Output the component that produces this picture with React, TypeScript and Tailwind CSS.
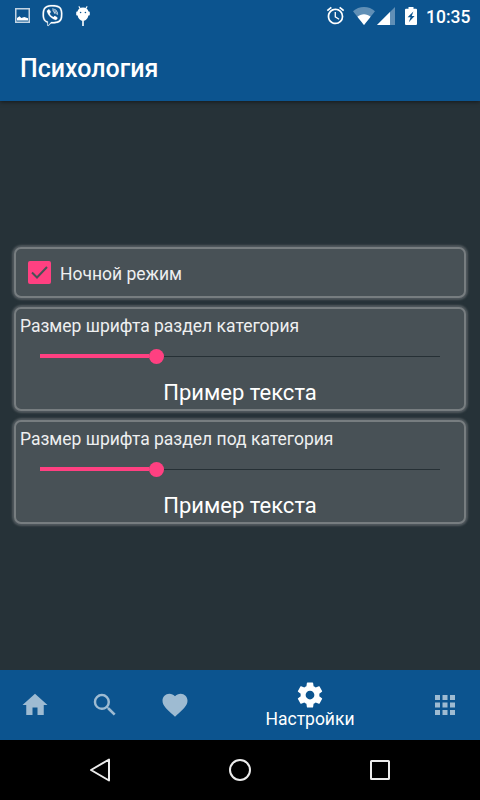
import type { ReactNode } from 'react'
import { FaViber } from 'react-icons/fa'
import { MdAlarm, MdApps, MdFavorite, MdHome, MdSearch } from 'react-icons/md'

function PictureIcon() {
  return (
    <svg viewBox="0 0 15 15" className="h-[15px] w-[15px]" fill="none">
      <rect x="0.75" y="0.75" width="13.5" height="13.5" stroke="#c3d4e3" strokeWidth="1.5" />
      <path d="M2 12.5V10l2.5-1.7L6.3 10l3-1 3.7 1.2v2.3z" fill="#fff" />
    </svg>
  )
}

function DroidIcon() {
  return (
    <svg viewBox="0 0 14 20" className="h-5 w-3.5" fill="#fff">
      <path d="M2.8.4 4.5 3M11.2.4 9.5 3" stroke="#fff" strokeWidth="1.1" />
      <path d="M7 1.4c3.2 0 5.2 1.8 5.5 4.2h.5a.8.8 0 0 1 .8.8v2.4a.8.8 0 0 1-.8.8h-.6C11.8 12.700 9.800 15 7 15S2.200 12.700 1.600 9.600H1a.8.8 0 0 1-.8-.8V6.400a.8.8 0 0 1 .8-.8h.5C1.800 3.200 3.800 1.400 7 1.400z" />
      <path d="M6.200 14.500h1.600V20H6.200z" />
      <circle cx="4.600" cy="6.500" r=".8" fill="#0c548f" />
      <circle cx="9.400" cy="6.500" r=".8" fill="#0c548f" />
    </svg>
  )
}

function WifiIcon() {
  return (
    <svg viewBox="0 0 22 18" className="h-[18px] w-[22px]">
      <path d="M11 18 0 4.2C3 1.6 6.8 0 11 0s8 1.6 11 4.2z" fill="#fff" fillOpacity=".35" />
      <path d="M11 18 4.4 9.7C6.2 8.2 8.5 7.3 11 7.3s4.8.9 6.6 2.4z" fill="#fff" />
    </svg>
  )
}

function SignalIcon() {
  return (
    <svg viewBox="0 0 18 18" className="h-[18px] w-[18px]">
      <path d="M0 18 18 0v18z" fill="#fff" fillOpacity=".35" />
      <path d="M0 18 13 5v13z" fill="#fff" />
    </svg>
  )
}

function BatteryIcon() {
  return (
    <svg viewBox="0 0 12 18" className="h-[18px] w-3">
      <path d="M3.5 0h5v1.8H11a1 1 0 0 1 1 1V17a1 1 0 0 1-1 1H1a1 1 0 0 1-1-1V2.8a1 1 0 0 1 1-1h2.5z" fill="#fff" />
      <path d="M8.4 4.5 2.6 10.3h3L3.8 15.3 9.6 9H6.7z" fill="#0c548f" />
    </svg>
  )
}

function GearIcon() {
  return (
    <svg viewBox="0 0 24 24" className="h-[30px] w-[30px]" fill="currentColor">
      <path d="M19.43 12.98c.04-.32.07-.64.07-.98s-.03-.66-.07-.98l2.11-1.65c.19-.15.24-.42.12-.64l-2-3.46c-.12-.22-.39-.3-.61-.22l-2.49 1c-.52-.4-1.08-.73-1.69-.98l-.38-2.65C14.46 2.18 14.25 2 14 2h-4c-.25 0-.46.18-.49.42l-.38 2.65c-.61.25-1.17.59-1.69.98l-2.49-1c-.23-.09-.49 0-.61.22l-2 3.46c-.13.22-.07.49.12.64l2.11 1.65c-.04.32-.07.65-.07.98s.03.66.07.98l-2.11 1.65c-.19.15-.24.42-.12.64l2 3.46c.12.22.39.3.61.22l2.49-1c.52.4 1.08.73 1.69.98l.38 2.65c.03.24.24.42.49.42h4c.25 0 .46-.18.49-.42l.38-2.65c.61-.25 1.17-.59 1.69-.98l2.49 1c.23.09.49 0 .61-.22l2-3.46c.12-.22.07-.49-.12-.64l-2.11-1.65zM12 15.5c-1.93 0-3.5-1.57-3.5-3.5s1.57-3.5 3.5-3.5 3.5 1.57 3.5 3.5-1.57 3.5-3.5 3.5z" />
    </svg>
  )
}

function StatusBar() {
  return (
    <div className="flex h-[37px] items-start">
      <div className="ml-[15px] mt-2">
        <PictureIcon />
      </div>
      <FaViber className="ml-3 mt-[5px] h-[21px] w-[21px] overflow-visible stroke-white stroke-[5px]" />
      <div className="ml-[13px] mt-[6px]">
        <DroidIcon />
      </div>
      <MdAlarm className="ml-[235px] mt-[5px] h-[21px] w-[21px]" />
      <div className="ml-[7px] mt-[7px]">
        <WifiIcon />
      </div>
      <div className="ml-0.5 mt-[7px]">
        <SignalIcon />
      </div>
      <div className="ml-[10px] mt-[7px]">
        <BatteryIcon />
      </div>
      <span className="ml-[9px] mt-[5px] text-[17.5px] font-medium leading-6">10:35</span>
    </div>
  )
}

function Card({ children }: { children: ReactNode }) {
  return (
    <section className="rounded-[7px] border-2 border-[#777d80] bg-[#485156] shadow-[0_0_2px_2px_#50585d]">
      {children}
    </section>
  )
}

function FontSizeCard({ label }: { label: string }) {
  return (
    <Card>
      <div className="flex h-[100px] flex-col pl-1">
        <h2 className="mt-[5px] text-[17.5px] leading-6 text-[#eeeff0]">{label}</h2>
        <div className="ml-5 mt-[10px] flex h-4 w-[400px] items-center">
          <div className="h-1 w-[109px] bg-[#ff4081]" />
          <div className="h-[15px] w-[15px] rounded-full bg-[#ff4081]" />
          <div className="h-px flex-1 bg-[#263035]" />
        </div>
        <p className="mr-1 mt-[13px] text-center text-[22px] leading-8">Пример текста</p>
      </div>
    </Card>
  )
}

export default function App() {
  return (
    <div className="flex h-[800px] w-[480px] flex-col overflow-hidden bg-[#263238] font-[Roboto,sans-serif] text-white">
      <header className="z-10 h-[101px] bg-[#0c548f] shadow-[0_1px_4px_rgba(0,0,0,0.5)]">
        <StatusBar />
        <h1 className="ml-5 mt-[15px] text-[25px] font-medium leading-[34px]">Психология</h1>
      </header>

      <main className="flex flex-1 flex-col justify-center gap-[9px] px-[14px]">
        <Card>
          <div className="flex h-[47px] items-center pl-3">
            <span className="flex h-[23px] w-[23px] items-center justify-center rounded-[2px] bg-[#ff4081]">
              <svg viewBox="0 0 17 13" className="h-[13px] w-[17px]" fill="none">
                <path d="m1 6.5 5 5L16 1" stroke="#485156" strokeWidth="2" />
              </svg>
            </span>
            <span className="ml-[9px] mt-0.5 text-[17.5px] leading-6 text-[#eeeff0]">Ночной режим</span>
          </div>
        </Card>
        <FontSizeCard label="Размер шрифта раздел категория" />
        <FontSizeCard label="Размер шрифта раздел под категория" />
      </main>

      <nav className="flex h-[70px] items-center bg-[#0c548f] text-[#9ebbd2]">
        <MdHome className="ml-5 h-[30px] w-[30px]" />
        <MdSearch className="ml-10 h-[30px] w-[30px]" />
        <MdFavorite className="ml-10 h-[30px] w-[30px]" />
        <div className="flex h-full w-[240px] flex-col items-center pt-[10px] text-white">
          <GearIcon />
          <span className="-mt-[3px] text-[17.5px] leading-6">Настройки</span>
        </div>
        <MdApps className="h-[30px] w-[30px]" />
      </nav>

      <footer className="flex h-[60px] items-center bg-black">
        <svg viewBox="0 0 480 60" className="h-[60px] w-[480px]" fill="none" stroke="#ececec" strokeWidth="2">
          <path d="M109 19.5v21L91 30z" strokeLinejoin="round" />
          <circle cx="240" cy="30" r="10" />
          <rect x="371" y="21" width="18" height="18" rx=".5" />
        </svg>
      </footer>
    </div>
  )
}
